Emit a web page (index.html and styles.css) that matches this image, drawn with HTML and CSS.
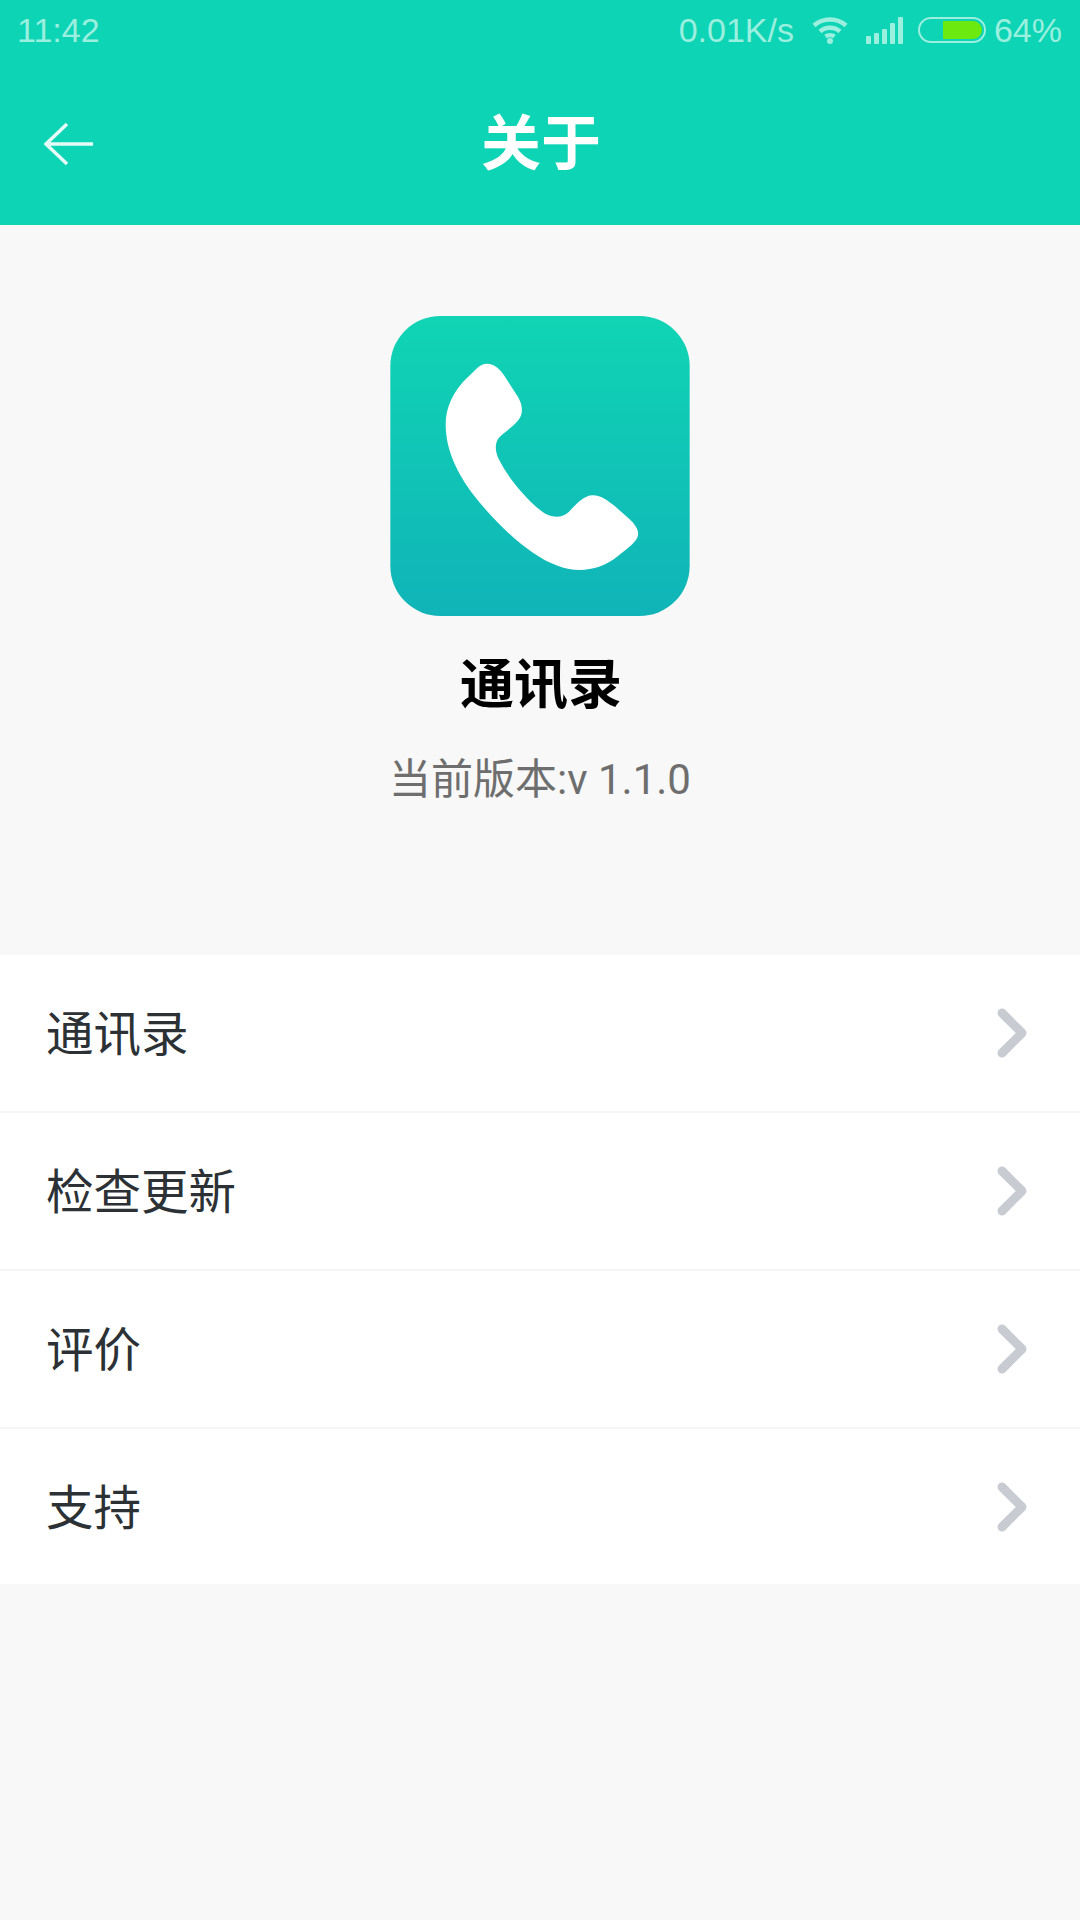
FILE: index.html
```html
<!DOCTYPE html>
<html lang="zh-CN">
<head>
  <meta charset="UTF-8" />
  <title>关于</title>
  <link rel="stylesheet" href="styles.css">
</head>
<body>

  <header class="topbar">
    <div class="status">
      <span class="time">11:42</span>
      <div class="status-right">
        <span class="speed">0.01K/s</span>
        <svg class="wifi" width="36" height="28" viewBox="0 0 36 28">
          <path d="M2 9.5C11 1.5 25 1.5 34 9.5" />
          <path d="M8 15.5C13.5 10.5 22.5 10.5 28 15.5" />
          <path d="M13.5 20.5C16 18.8 20 18.8 22.5 20.5" />
          <circle cx="18" cy="25" r="3" />
        </svg>
        <div class="signal">
          <i class="b1"></i><i class="b2"></i><i class="b3"></i><i class="b4"></i><i class="b5"></i>
        </div>
        <div class="battery"><div class="battery-fill"></div></div>
        <span class="percent">64%</span>
      </div>
    </div>
    <div class="nav">
      <svg class="back" width="50" height="44" viewBox="0 0 50 44">
        <path d="M23 2L2 22L23 42M2 22H49" />
      </svg>
      <h1>关于</h1>
    </div>
  </header>

  <section class="about">
    <svg class="logo" width="300" height="300" viewBox="62 45 898 900">
      <defs>
        <linearGradient id="logoBg" x1="0" y1="0" x2="0" y2="1">
          <stop offset="0" stop-color="#10d4b4" />
          <stop offset="1" stop-color="#10b4b8" />
        </linearGradient>
      </defs>
      <rect x="62" y="45" width="898" height="900" rx="150" fill="url(#logoBg)" />
      <path fill="#fff" d="M352 188C374 188 390 203 404 224L445 288C458 310 462 335 448 355C430 378 405 392 388 410C375 425 376 450 386 472C415 530 465 590 515 630C540 650 575 655 598 632C618 612 640 583 670 583C695 583 715 600 735 615L780 655C798 672 812 692 802 712C792 730 770 745 745 765C712 792 670 807 630 807C590 807 540 790 490 755C430 715 365 650 310 580C265 520 228 450 228 370C228 320 250 270 295 228C320 205 330 188 352 188Z" />
    </svg>
    <h2>通讯录</h2>
    <p>当前版本:v 1.1.0</p>
  </section>

  <ul class="menu">
    <li><span class="label">通讯录</span><svg class="chev" width="36" height="56" viewBox="0 0 36 56"><path d="M7 8L27 28L7 48" /></svg></li>
    <li><span class="label">检查更新</span><svg class="chev" width="36" height="56" viewBox="0 0 36 56"><path d="M7 8L27 28L7 48" /></svg></li>
    <li><span class="label">评价</span><svg class="chev" width="36" height="56" viewBox="0 0 36 56"><path d="M7 8L27 28L7 48" /></svg></li>
    <li><span class="label">支持</span><svg class="chev" width="36" height="56" viewBox="0 0 36 56"><path d="M7 8L27 28L7 48" /></svg></li>
  </ul>

</body>
</html>
```

FILE: styles.css
```css
* {
  box-sizing: border-box;
}

body {
  margin: 0;
  width: 1080px;
  height: 1920px;
  overflow: hidden;
  background: #f8f8f8;
  font-family: Roboto, "Noto Sans CJK SC", sans-serif;
}

.topbar {
  height: 225px;
  background: #0dd4b5;
}

.status {
  height: 60px;
  padding: 0 18px 0 17px;
  display: flex;
  justify-content: space-between;
  align-items: center;
  color: #9befdf;
  font-family: "Liberation Sans", sans-serif;
  font-size: 34px;
}

.status-right {
  display: flex;
  align-items: center;
}

.wifi {
  margin-left: 18px;
}

.wifi path {
  fill: none;
  stroke: #9befdf;
  stroke-width: 4.5;
}

.wifi circle {
  fill: #9befdf;
}

.signal {
  margin-left: 18px;
  height: 27px;
  display: flex;
  align-items: flex-end;
  gap: 3px;
}

.signal i {
  display: block;
  width: 5px;
  background: #9befdf;
  border-radius: 1px;
}

.b1 { height: 8px; }
.b2 { height: 11px; }
.b3 { height: 15px; }
.b4 { height: 21px; }
.b5 { height: 27px; }

.battery {
  margin-left: 15px;
  width: 68px;
  height: 26px;
  border: 2px solid #9befdf;
  border-radius: 13px;
  padding: 2px;
  display: flex;
  justify-content: flex-end;
}

.battery-fill {
  width: 39px;
  background: #6cea10;
  border-radius: 0 10px 10px 0;
}

.percent {
  margin-left: 8px;
}

.nav {
  height: 165px;
  padding: 3px 0 0 44px;
  position: relative;
  display: flex;
  align-items: center;
}

.back path {
  fill: none;
  stroke: #e6fbf7;
  stroke-width: 3.5;
}

.nav h1 {
  margin: 0;
  position: absolute;
  left: 2px;
  right: 0;
  top: 50px;
  text-align: center;
  color: #fff;
  font-size: 60px;
  line-height: 70px;
  font-weight: 700;
}

.about {
  height: 730px;
  padding-top: 91px;
  display: flex;
  flex-direction: column;
  align-items: center;
}

.logo {
  display: block;
}

.about h2 {
  margin: 35px 0 0 2px;
  color: #000;
  font-size: 54px;
  line-height: 70px;
  font-weight: 700;
}

.about p {
  margin: 34px 0 0;
  color: #6e6e6e;
  font-size: 42px;
  line-height: 50px;
}

.menu {
  margin: 0;
  padding: 0;
  list-style: none;
  background: #fff;
}

.menu li {
  height: 158px;
  padding: 0 46px;
  display: flex;
  justify-content: space-between;
  align-items: center;
  border-bottom: 2px solid #f5f5f5;
  color: #2b3135;
  font-size: 47.5px;
}

.menu li:last-child {
  height: 155px;
  border-bottom: none;
}

.label {
  padding-bottom: 5px;
}

.chev {
  margin-right: 3px;
}

.chev path {
  fill: none;
  stroke: #c8ccd2;
  stroke-width: 9;
  stroke-linecap: round;
  stroke-linejoin: round;
}
```
